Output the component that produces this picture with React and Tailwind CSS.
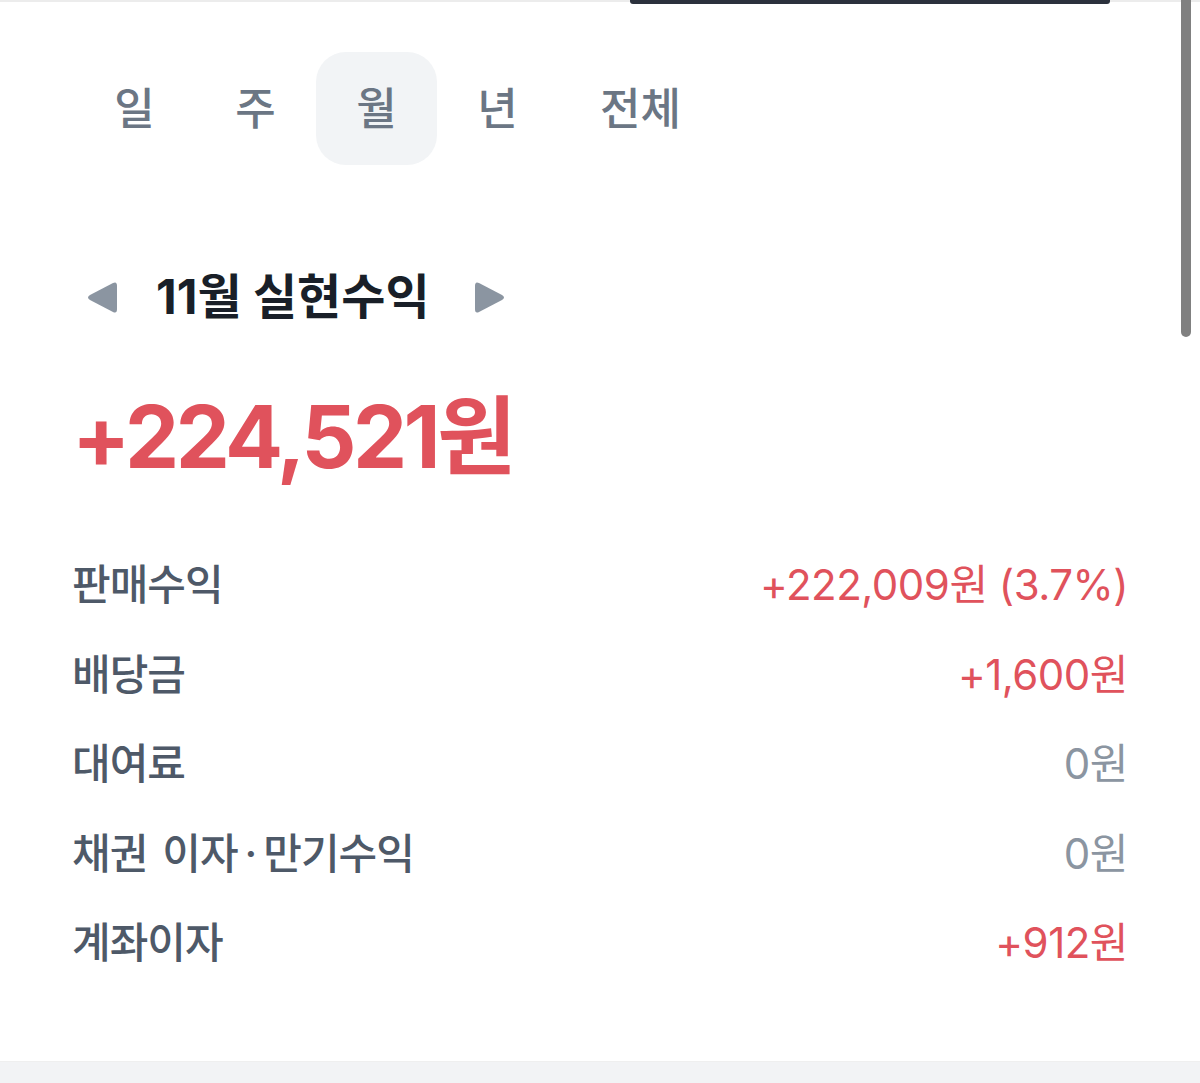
import React from "react";

const FONT = { fontFamily: 'Inter, "Noto Sans CJK KR", "Noto Sans", sans-serif' };

function TriLeft() {
  return (
    <svg width="32" height="35" viewBox="0 0 32 35">
      <path d="M27 3 Q31 1 31 6 L31 29 Q31 34 27 32 L4 20 Q0 17.5 4 15 Z" fill="#8b95a1" />
    </svg>
  );
}
function TriRight() {
  return (
    <svg width="32" height="35" viewBox="0 0 32 35">
      <path d="M5 3 Q1 1 1 6 L1 29 Q1 34 5 32 L28 20 Q32 17.5 28 15 Z" fill="#8b95a1" />
    </svg>
  );
}

const rows = [
  { label: "판매수익", value: "+222,009원 (3.7%)", red: true },
  { label: "배당금", value: "+1,600원", red: true },
  { label: "대여료", value: "0원", red: false },
  {
    label: (
      <>
        채권<span className="inline-block w-[15px]"> </span>이자<span className="mx-[7px]">·</span>만기수익
      </>
    ),
    key: "bond",
    value: "0원",
    red: false,
  },
  { label: "계좌이자", value: "+912원", red: true },
];

export default function App() {
  const tabs = ["일", "주", "월", "년"];
  return (
    <div className="relative w-full h-[1083px] bg-white overflow-hidden flex flex-col" style={FONT}>
      {/* top strip */}
      <div className="relative h-[4px] shrink-0">
        <div className="h-[2px] bg-[#ececec]" />
        <div className="absolute left-[630px] top-0 w-[480px] h-[4px] bg-[#2b313d] rounded-b-[3px]" />
      </div>

      {/* tabs */}
      <div className="flex mt-[48px] pl-[74px]">
        {tabs.map((t) => (
          <div
            key={t}
            className={
              "w-[121px] h-[113px] flex items-center justify-center rounded-[30px] text-[44px] font-medium text-[#6b7684] " +
              (t === "월" ? "bg-[#f2f4f6]" : "")
            }
          >
            {t}
          </div>
        ))}
        <div className="h-[113px] px-[42px] flex items-center justify-center text-[44px] font-medium text-[#6b7684]">
          전체
        </div>
      </div>

      {/* title row */}
      <div className="flex items-center h-[60px] mt-[102px] pl-[86px]">
        <TriLeft />
        <div className="ml-[38px] text-[48px] font-bold text-[#191f28] leading-none">
          11월 실현수익
        </div>
        <div className="ml-[44px]">
          <TriRight />
        </div>
      </div>

      {/* big number */}
      <div className="mt-[60px] pl-[72px] h-[100px] leading-[100px] text-[86px] font-bold text-[#e0525c] tracking-[-3.5px]">
        +224,521원
      </div>

      {/* rows */}
      <div className="mt-[53px] px-[72px] flex flex-col">
        {rows.map((r, i) => (
          <div key={i} className="h-[89.5px] flex items-center justify-between">
            <span className="text-[42px] font-medium text-[#4e5968] tracking-[-1px] whitespace-nowrap">{r.label}</span>
            <span className={"text-[42px] tracking-[-0.5px] " + (r.red ? "text-[#e0525c]" : "text-[#8b95a1]")}>
              {r.value}
            </span>
          </div>
        ))}
      </div>

      <div className="mt-auto h-[22px] bg-[#f2f3f5] border-t border-[#efefef]" />

      {/* scrollbar overlay */}
      <div className="absolute right-[9px] top-0 w-[10px] h-[337px] bg-[#808080] rounded-b-full" />
    </div>
  );
}
